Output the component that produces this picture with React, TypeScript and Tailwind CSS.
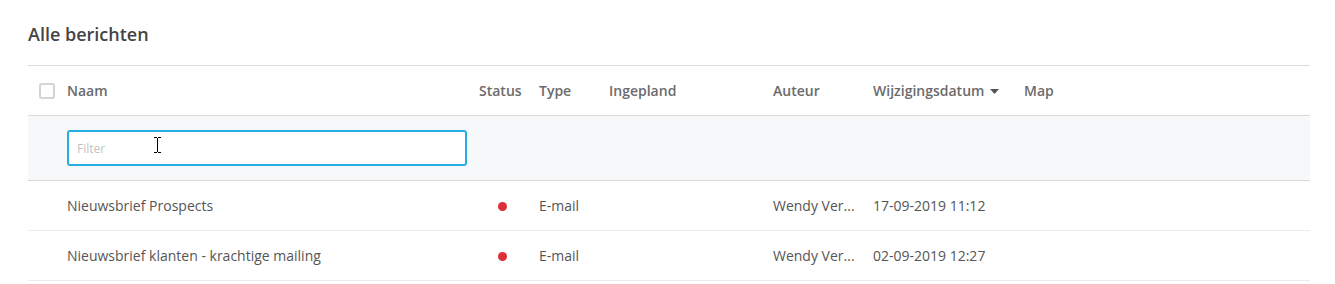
import React from 'react';

type Bericht = {
  naam: string;
  type: string;
  auteur: string;
  datum: string;
};

// auteur is shown the way the list cuts it off
const berichten: Bericht[] = [
  { naam: 'Nieuwsbrief Prospects', type: 'E-mail', auteur: 'Wendy Ver...', datum: '17-09-2019 11:12' },
  { naam: 'Nieuwsbrief klanten - krachtige mailing', type: 'E-mail', auteur: 'Wendy Ver...', datum: '02-09-2019 12:27' },
];

const cols = 'grid grid-cols-[39px_412px_60px_70px_164px_100px_151px_1fr] items-center';

const SortCaret = () => (
  <svg width="9" height="5" viewBox="0 0 9 5" className="ml-[6px] mt-[2px] inline-block">
    <path d="M0 0h9L4.5 5z" fill="#555" />
  </svg>
);

const IBeam = () => (
  <svg width="9" height="16" viewBox="0 0 9 16" className="absolute left-[86px] top-[7px] pointer-events-none">
    <path d="M1 0.5h3M5 0.5h3M4.5 1v14M1 15.5h3M5 15.5h3" stroke="#000" strokeWidth="1" fill="none" />
  </svg>
);

export default function App() {
  return (
    <div className="bg-white w-[1335px] h-[284px] pl-[28px] pr-[25px] pt-[22px] font-['Open_Sans',sans-serif]">
      <h1 className="text-[18px] leading-[24px] font-semibold text-[#444] mb-[19px]">Alle berichten</h1>

      <div className="w-[1282px]">
        {/* Header */}
        <div className={`${cols} h-[51px] border-y border-[#dadada] text-[14px] font-semibold text-[#6b6b6b]`}>
          <div className="pl-[11px]">
            <div className="w-[16px] h-[16px] rounded-[3px] border-2 border-[#d4d4d4] bg-white" />
          </div>
          <div>Naam</div>
          <div>Status</div>
          <div>Type</div>
          <div>Ingepland</div>
          <div>Auteur</div>
          <div className="flex items-center">
            Wijzigingsdatum
            <SortCaret />
          </div>
          <div>Map</div>
        </div>

        {/* Filter */}
        <div className={`${cols} h-[65px] bg-[#f7f8fa] border-b border-[#d8d8d8]`}>
          <div />
          <div className="relative">
            <input
              placeholder="Filter"
              className="w-[400px] h-[36px] rounded-[3px] border-2 border-[#27aee3] bg-white px-[8px] text-[12px] text-[#555] placeholder:text-[#c2c2c2] outline-none"
            />
            <IBeam />
          </div>
        </div>

        {/* Rows */}
        {berichten.map((b) => (
          <div key={b.naam} className={`${cols} h-[50px] border-b border-[#ececec] text-[14px] text-[#555]`}>
            <div />
            <div>{b.naam}</div>
            <div className="pl-[19px]">
              <div className="w-[9px] h-[9px] rounded-full bg-[#dc2f3a] mt-[1px]" />
            </div>
            <div>{b.type}</div>
            <div />
            <div className="whitespace-nowrap">{b.auteur}</div>
            <div>{b.datum}</div>
            <div />
          </div>
        ))}
      </div>
    </div>
  );
}
